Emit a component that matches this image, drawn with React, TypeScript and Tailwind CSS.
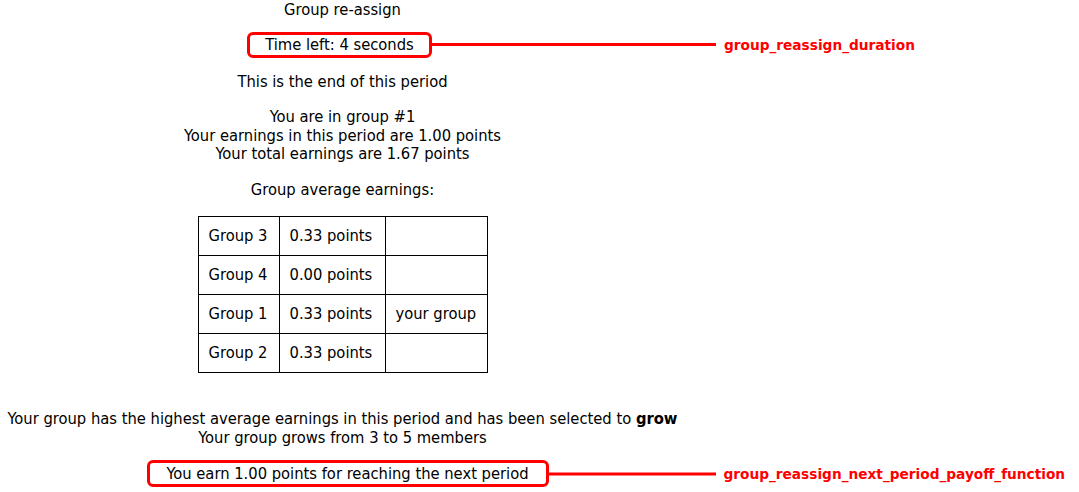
import React from "react";

const groups = [
  { name: "Group 3", avg: "0.33 points", mine: false },
  { name: "Group 4", avg: "0.00 points", mine: false },
  { name: "Group 1", avg: "0.33 points", mine: true },
  { name: "Group 2", avg: "0.33 points", mine: false },
];

// red callout: outlined box + leader line + field name
function Callout({
  label,
  lineW,
  className,
  children,
}: {
  label: string;
  lineW: string;
  className: string;
  children: React.ReactNode;
}) {
  return (
    <div className={`relative inline-block border-[3px] border-[#ff0000] rounded-[6px] ${className}`}>
      {children}
      <div className="absolute left-full top-1/2 -translate-y-1/2 flex items-center">
        <div className={`h-[3px] bg-[#ff0000] ${lineW}`} />
        <span className="ml-[8px] whitespace-nowrap font-['DejaVu_Sans',sans-serif] [font-stretch:normal] font-bold text-[13.7px] text-[#ff0000]">
          {label}
        </span>
      </div>
    </div>
  );
}

export default function App() {
  return (
    <div className="w-[1079px] h-[492px] bg-white overflow-hidden">
      <div className="w-[685px] text-center text-[16.4px] leading-[18.5px] text-black font-['DejaVu_Sans_Condensed','DejaVu_Sans',sans-serif] [font-stretch:semi-condensed]">
        <p className="pt-[1px]">Group re-assign</p>

        <div className="mt-[12px] pr-[6px]">
          <Callout label="group_reassign_duration" lineW="w-[287px]" className="w-[185px] h-[26px] leading-[20px]">
            Time left: 4 seconds
          </Callout>
        </div>

        <p className="mt-[15px]">This is the end of this period</p>

        <div className="mt-[17px]">
          <p>You are in group #1</p>
          <p>Your earnings in this period are 1.00 points</p>
          <p>Your total earnings are 1.67 points</p>
        </div>

        <p className="mt-[17px]">Group average earnings:</p>

        <table className="mx-auto mt-[17px] border-collapse text-left">
          <tbody>
            {groups.map((g) => (
              <tr key={g.name} className="h-[39px]">
                <td className="w-[81px] border border-black px-[10px]">{g.name}</td>
                <td className="w-[106px] border border-black px-[10px]">{g.avg}</td>
                <td className="w-[102px] border border-black px-[10px]">{g.mine ? "your group" : ""}</td>
              </tr>
            ))}
          </tbody>
        </table>

        <div className="mt-[37px]">
          <p>
            Your group has the highest average earnings in this period and has been selected to{" "}
            <b>grow</b>
          </p>
          <p>Your group grows from 3 to 5 members</p>
        </div>

        <div className="mt-[13px] pl-[10px]">
          <Callout
            label="group_reassign_next_period_payoff_function"
            lineW="w-[170px]"
            className="w-[402px] h-[27px] leading-[21px]"
          >
            You earn 1.00 points for reaching the next period
          </Callout>
        </div>
      </div>
    </div>
  );
}
